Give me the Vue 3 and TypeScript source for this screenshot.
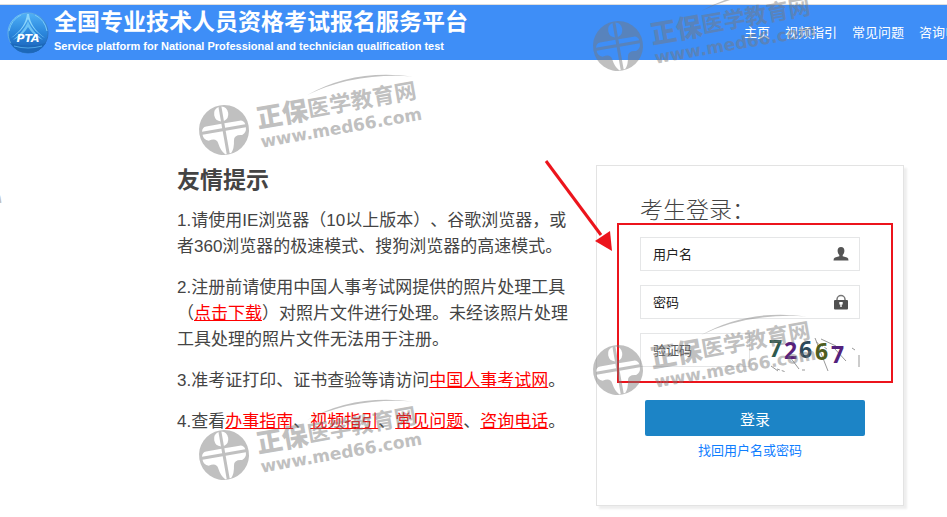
<script setup lang="ts">
import { ref } from 'vue'

interface NavItem {
  label: string
  href: string
}

interface Mark {
  x: number
  y: number
}

const navItems: NavItem[] = [
  { label: '主页', href: '#home' },
  { label: '视频指引', href: '#video' },
  { label: '常见问题', href: '#faq' },
  { label: '咨询电话', href: '#contact' },
]

const guideLinks: NavItem[] = [
  { label: '办事指南', href: '#guide' },
  { label: '视频指引', href: '#video' },
  { label: '常见问题', href: '#faq' },
  { label: '咨询电话', href: '#contact' },
]

// Centre of each watermark's round emblem.
const marks: Mark[] = [
  { x: -196, y: 213 },
  { x: 224, y: 130 },
  { x: 618, y: 46 },
  { x: 224, y: 455 },
  { x: 618, y: 370 },
]

const username = ref('')
const password = ref('')
const captcha = ref('')
</script>

<template>
  <div class="page">
    <header class="header">
      <svg class="logo" viewBox="0 0 42 42" aria-hidden="true">
        <defs>
          <linearGradient id="globe" x1="0" y1="0" x2="0" y2="1">
            <stop offset="0" stop-color="#4fb0f6" />
            <stop offset="0.5" stop-color="#2a86dc" />
            <stop offset="1" stop-color="#1a5fb4" />
          </linearGradient>
          <linearGradient id="rim" x1="0" y1="0" x2="1" y2="1">
            <stop offset="0" stop-color="#7fd0fb" />
            <stop offset="1" stop-color="#1459b0" />
          </linearGradient>
        </defs>
        <circle cx="21" cy="21" r="20" fill="url(#globe)" stroke="url(#rim)" />
        <path d="M20 2C19 11 14 19 4 26C11 22 17 16 21 7C25 16 31 22 38 26C28 19 23 11 22 2Z" fill="#8bd5fb" />
        <path d="M21 9C18 17 12 23 6 28C13 25 18 20 21 15C24 20 29 25 36 28C30 23 24 17 21 9Z" fill="#6cc3f6" />
        <path d="M3 31Q21 36 39 31Q33 41 21 41Q9 41 3 31Z" fill="#1c68ba" />
        <path d="M7 34Q21 38 35 34" fill="none" stroke="#4da5e8" />
        <path d="M2 19Q4 8 14 3M40 19Q38 8 28 3" fill="none" stroke="#7ac9f8" />
        <text class="logo-text" x="21" y="30" text-anchor="middle">PTA</text>
      </svg>
      <div class="brand">
        <h1 class="brand-title">全国专业技术人员资格考试报名服务平台</h1>
        <p class="brand-sub">Service platform for National Professional and technician qualification test</p>
      </div>
      <nav class="nav">
        <a v-for="item in navItems" :key="item.label" :href="item.href">{{ item.label }}</a>
      </nav>
    </header>

    <main class="main">
      <section class="tips">
        <h2>友情提示</h2>
        <p>1.请使用IE浏览器（10以上版本）、谷歌浏览器，或者360浏览器的极速模式、搜狗浏览器的高速模式。</p>
        <p>2.注册前请使用中国人事考试网提供的照片处理工具（<a href="#download">点击下载</a>）对照片文件进行处理。未经该照片处理工具处理的照片文件无法用于注册。</p>
        <p>3.准考证打印、证书查验等请访问<a href="#cpta">中国人事考试网</a>。</p>
        <p>4.查看<template v-for="(link, i) in guideLinks" :key="link.label"><a :href="link.href">{{ link.label }}</a>{{ i < guideLinks.length - 1 ? '、' : '。' }}</template></p>
      </section>

      <form class="card" @submit.prevent>
        <h2>考生登录：</h2>
        <div class="field">
          <input id="username" v-model="username" type="text" placeholder="用户名" aria-label="用户名" />
          <label for="username">
            <svg viewBox="0 0 16 16" aria-hidden="true">
              <path d="M8 1C10.400 1 11.500 2.600 11.400 5C11.300 7 10.500 8.300 9.700 9V10.300L14 11.500Q15.500 12 15.500 14.500H0.500Q0.500 12 2 11.500L6.300 10.300V9C5.500 8.300 4.700 7 4.600 5C4.500 2.600 5.600 1 8 1Z" fill="#555" />
            </svg>
          </label>
        </div>
        <div class="field">
          <input id="password" v-model="password" type="password" placeholder="密码" aria-label="密码" />
          <label for="password">
            <svg viewBox="0 0 16 16" aria-hidden="true">
              <path d="M4 7V5.500A4 4 0 0 1 12 5.500V7" fill="none" stroke="#777" stroke-width="1.500" />
              <rect x="1" y="6" width="14" height="9.500" rx="1" fill="#505050" />
              <path d="M6.300 8H9.700V10.500H8.700V13H7.300V10.500H6.300Z" fill="#fff" />
            </svg>
          </label>
        </div>
        <div class="captcha">
          <div class="field">
            <input id="captcha" v-model="captcha" type="text" placeholder="验证码" aria-label="验证码" />
          </div>
          <svg class="captcha-code" viewBox="0 0 92 36" role="img" aria-label="72667">
            <g fill="none" stroke="#999">
              <path d="M3 30L10 35M22 21L31 33M47 2L60 35M53 3L68 10M66 12L78 25M84 12L87 14M91 19V31" />
              <path d="M9 33L18 36M34 34H39M48 6L59 13" stroke-dasharray="3 2" />
            </g>
            <text x="1" y="21" fill="#2f5a4e">7</text>
            <text x="16" y="23" fill="#57217c">2</text>
            <text x="31" y="22" fill="#2c485a">6</text>
            <text x="47" y="24" fill="#4d5d20">6</text>
            <text x="63" y="27" fill="#53217c">7</text>
          </svg>
        </div>
        <button type="submit">登录</button>
        <a class="recover" href="#recover">找回用户名或密码</a>
        <div class="highlight"></div>
        <svg class="arrow" viewBox="0 0 72 96" aria-hidden="true">
          <path d="M3 3L58 77" stroke="#ec141c" stroke-width="3" fill="none" />
          <path d="M52 83L67 73L69 93Z" fill="#ec141c" />
        </svg>
      </form>
    </main>

    <svg class="watermarks" aria-hidden="true">
      <g v-for="(mark, i) in marks" :key="i" :transform="`translate(${mark.x} ${mark.y}) rotate(-10)`">
        <path
          fill-rule="evenodd"
          d="M0 -25A25 25 0 1 1 0 25A25 25 0 1 1 0 -25ZM-1.500 -23.500A7.500 7.500 0 0 0 -1.500 -9ZM1.500 -23.500A7.500 7.500 0 0 1 1.500 -9ZM-1.500 -6.500H-17Q-21 -6.500 -22 -2H-1.500ZM1.500 -6.500H17Q21 -6.500 22 -2H1.500ZM-1.500 1H-22Q-22 6 -17 8Q-9 6 -8 12Q-7 20 -3 24H-1.500ZM1.500 1H22Q22 6 17 8Q9 6 8 12Q7 20 3 24H1.500Z"
        />
        <path d="M88 -20Q138 -38 195 -20Q138 -34 88 -20Z" />
        <text class="mark-main" x="34" y="4">正保</text>
        <text class="mark-name" x="86" y="2">医学教育网</text>
        <text class="mark-url" x="34" y="24">www.med66.com</text>
      </g>
    </svg>
  </div>
</template>

<style>
body {
  margin: 0;
  background: #fff;
}
</style>

<style scoped>
.page {
  position: relative;
  min-height: 100vh;
  overflow: hidden;
  box-sizing: border-box;
  padding-top: 4px;
  color: #444;
  font-family: 'Liberation Sans', 'Noto Sans CJK SC', sans-serif;
  text-spacing-trim: space-all;
}
h1,
h2,
p {
  margin: 0;
}
.header {
  display: flex;
  align-items: center;
  height: 55px;
  padding-left: 7px;
  border-top: 1px solid #ddd;
  background: #3e8ef7;
  color: #fff;
}
.logo {
  flex: none;
  width: 42px;
  height: 42px;
}
.logo-text {
  fill: #fff;
  font: italic bold 11px 'DejaVu Sans', sans-serif;
}
.brand {
  flex: none;
  padding: 0 0 6px 5px;
}
.brand-title {
  font-size: 23px;
  line-height: 32px;
  font-weight: bold;
}
.brand-sub {
  font-size: 11px;
  line-height: 16px;
  font-weight: bold;
}
.nav {
  display: flex;
  gap: 15px;
  margin-left: auto;
  margin-right: -24px;
  font-size: 13px;
  line-height: 20px;
  white-space: nowrap;
}
.nav a {
  color: inherit;
  text-decoration: none;
}
.main {
  display: flex;
  justify-content: space-between;
  gap: 24px;
  padding: 105px 43px 8px 177px;
}
.tips {
  flex: 0 1 395px;
}
.tips h2 {
  margin-bottom: 13px;
  font-size: 23px;
  line-height: 30px;
}
.tips p {
  margin-bottom: 15px;
  font-size: 17px;
  line-height: 26px;
}
.tips a {
  color: #f00;
  text-decoration: underline;
}
.card {
  position: relative;
  flex: none;
  box-sizing: border-box;
  width: 308px;
  padding: 28px 43px 44px;
  border: 1px solid #e3e3e3;
  background: #fff;
  box-shadow: 3px 3px 2px #eee;
}
.card h2 {
  margin-bottom: 11px;
  font-size: 23px;
  line-height: 32px;
  font-weight: 300;
}
.field {
  display: flex;
  align-items: center;
  box-sizing: border-box;
  height: 34px;
  margin-bottom: 14px;
  padding: 0 10px 0 12px;
  border: 1px solid #e5e6e7;
}
.field input {
  flex: 1;
  min-width: 0;
  padding: 0;
  border: 0;
  outline: 0;
  background: transparent;
  color: #222;
  font: inherit;
  font-size: 13px;
}
.field input::placeholder {
  color: #222;
  opacity: 1;
}
.field label,
.field svg {
  display: block;
  width: 16px;
  height: 16px;
}
.captcha {
  display: flex;
  justify-content: space-between;
}
.captcha .field {
  width: 110px;
}
.captcha .field input::placeholder {
  color: #555;
}
.captcha-code {
  width: 92px;
  height: 36px;
  margin-top: 3px;
}
.captcha-code text {
  font: bold 23px 'Noto Sans', sans-serif;
}
.card button {
  display: block;
  width: 220px;
  height: 36px;
  margin: 19px 0 5px 5px;
  border: 0;
  border-radius: 2px;
  background: #1c84c6;
  color: #fff;
  font: inherit;
  font-size: 15px;
}
.recover {
  display: block;
  color: #0f7eff;
  font-size: 13px;
  line-height: 20px;
  text-align: center;
  text-decoration: none;
}
.highlight {
  position: absolute;
  top: 57px;
  left: 20px;
  right: 10px;
  height: 156px;
  border: 2px solid #ec141c;
  pointer-events: none;
}
.arrow {
  position: absolute;
  top: -8px;
  left: -54px;
  width: 72px;
  height: 96px;
  pointer-events: none;
}
.watermarks {
  position: absolute;
  top: 0;
  left: 0;
  width: 100%;
  height: 100%;
  fill: #777;
  opacity: 0.46;
  pointer-events: none;
}
.mark-main {
  font: 900 26px 'Noto Sans CJK SC', sans-serif;
}
.mark-name {
  font: bold 22px 'Noto Sans CJK SC', sans-serif;
}
.mark-url {
  font: bold 17px 'DejaVu Sans', sans-serif;
}
</style>
